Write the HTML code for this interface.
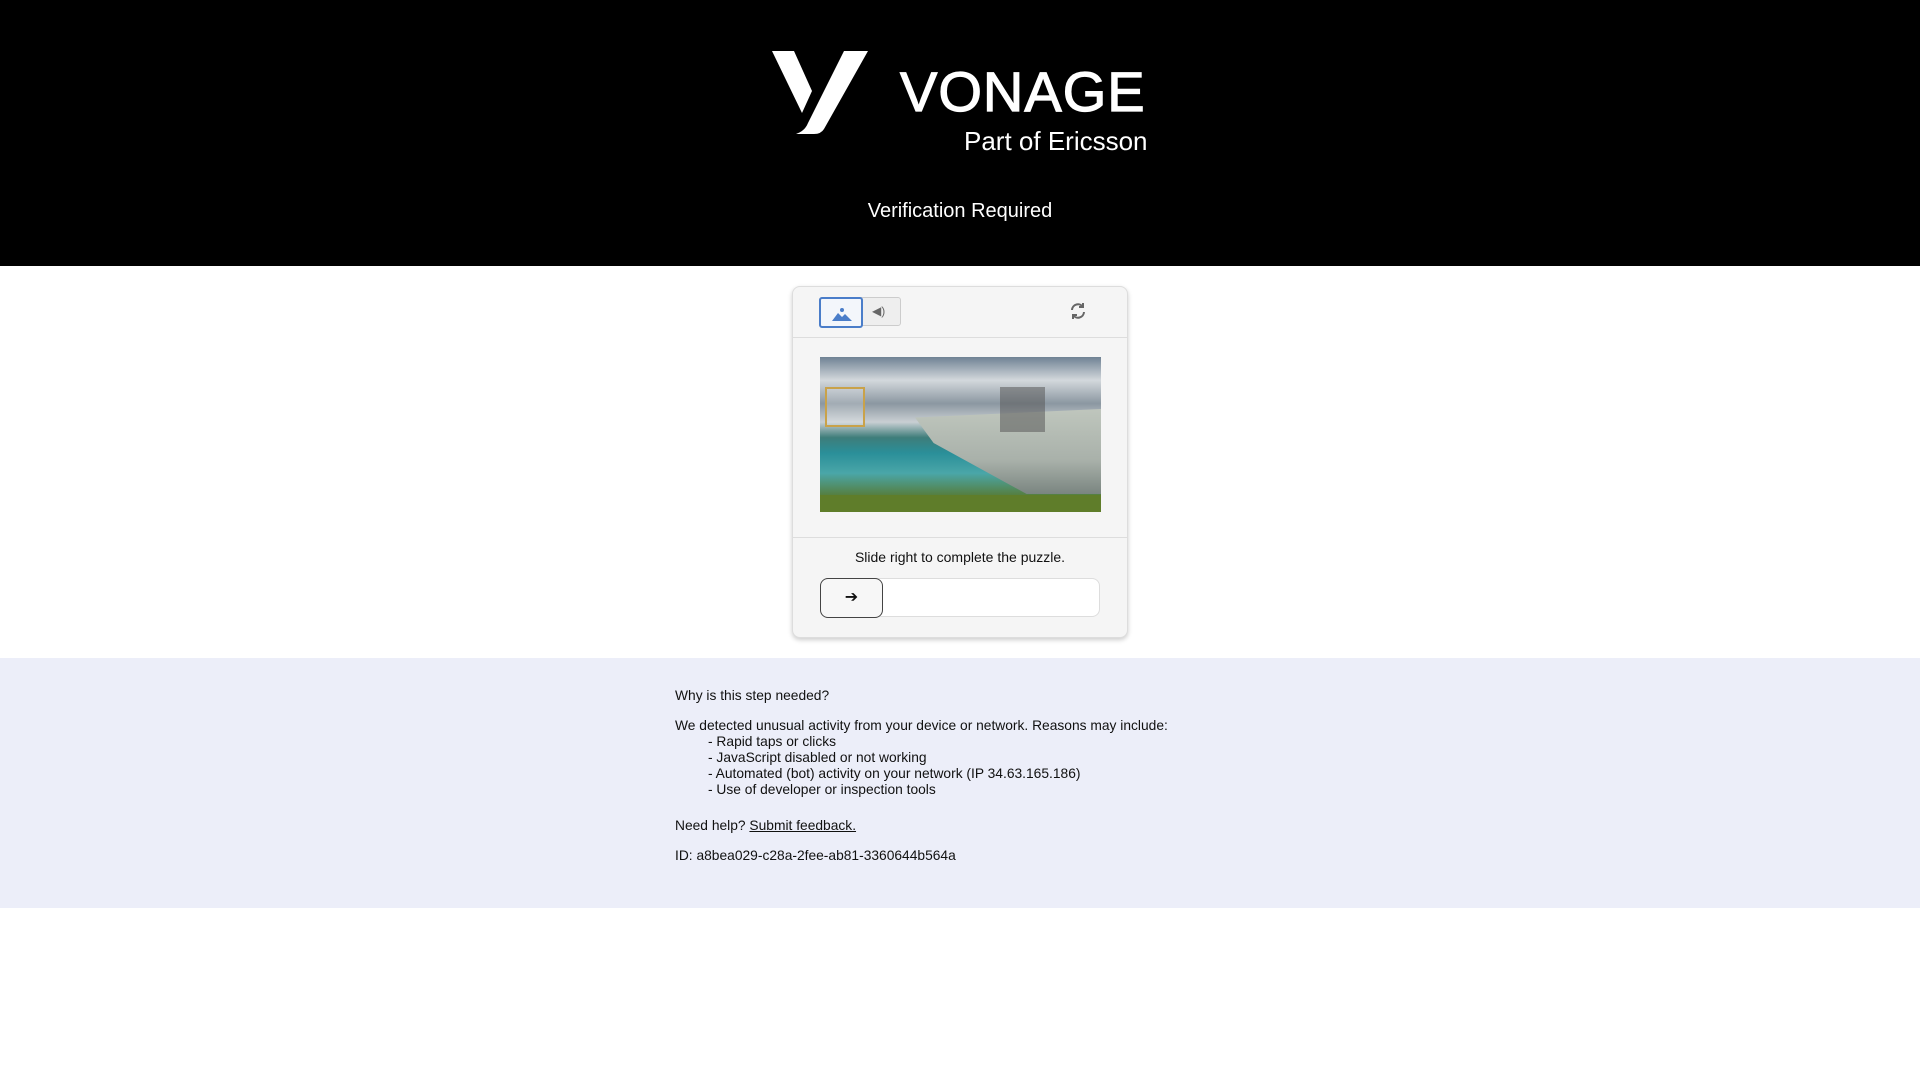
<!DOCTYPE html>
<html><head><meta charset="utf-8"><style>
*{margin:0;padding:0;box-sizing:border-box}
body{width:1920px;height:1080px;background:#fff;font-family:"Liberation Sans",sans-serif;position:relative;overflow:hidden;color:#111}
.hdr{position:absolute;left:0;top:0;width:1920px;height:266px;background:#000;color:#fff}
.vonage{position:absolute;left:900px;top:62px;font-size:56px;font-weight:normal;letter-spacing:1px;line-height:60px;-webkit-text-stroke:1.2px #fff}
.part{position:absolute;left:964px;top:126px;font-size:26px;line-height:30px}
.ver{position:absolute;left:0;width:1920px;text-align:center;top:200px;font-size:20px}
.card{position:absolute;left:792px;top:286px;width:336px;height:352px;background:#f5f5f5;border:1px solid #ddd;border-radius:8px;box-shadow:0 2px 5px rgba(0,0,0,.2)}
.tabs{position:absolute;left:26px;top:10px;width:82px;height:29px;border:1px solid #ccc;border-radius:3px;background:#eee}
.tab1{position:absolute;left:-1px;top:-1px;width:44px;height:31px;border:2px solid #4a7dc9;border-radius:3px;background:#f3f6fb}
.div1{position:absolute;left:0;top:50px;width:100%;height:1px;background:#ddd}
.img{position:absolute;left:27px;top:70px;width:281px;height:155px;overflow:hidden;
background:linear-gradient(180deg,#6f8294 0%,#d3d8dc 15%,#8b97a1 30%,#c9cfd3 42%,#3e7d7a 52%,#2a8f99 62%,#4aa6a8 75%,#567c3a 90%,#6c8a2b 100%)}
.div2{position:absolute;left:0;top:250px;width:100%;height:1px;background:#ddd}
.msg{position:absolute;left:0;width:100%;top:262px;text-align:center;font-size:14px}
.track{position:absolute;left:27px;top:291px;width:280px;height:39px;background:#fff;border:1px solid #ddd;border-radius:8px}
.btn{position:absolute;left:27px;top:291px;width:63px;height:40px;background:#f7f7f7;border:1px solid #444;border-radius:8px;text-align:center;line-height:38px;font-size:16px}
.foot{position:absolute;left:0;top:658px;width:1920px;height:250px;background:#eceef9}
.ft{position:absolute;left:675px;font-size:13.8px;line-height:16px}
.ind{left:708px}
</style></head><body>
<div class="hdr">
<svg style="position:absolute;left:772px;top:51px" width="96" height="83" viewBox="0 0 96 83"><path d="M0 0H22L40 40 30 62Z" fill="#fff"/><path d="M72 0H96L52 78Q49 83 42 83H24Q33 80 36 72Z" fill="#fff"/></svg>
<div class="vonage">VONAGE</div>
<div class="part">Part of Ericsson</div>
<div class="ver">Verification Required</div>
</div>
<div class="card">
<div class="tabs"><div class="tab1"><svg style="position:absolute;left:11px;top:8px" width="20" height="14" viewBox="0 0 20 14"><circle cx="10" cy="3" r="2" fill="#4a7dc9"/><path d="M0 14L6 6 10 10 13 7 20 14Z" fill="#4a7dc9"/></svg></div>
<span style="position:absolute;left:52px;top:6px;font-size:12px;color:#666">◀)</span></div>
<svg style="position:absolute;left:276px;top:15px" width="18" height="18" viewBox="0 0 18 18" fill="none" stroke="#666" stroke-width="2"><path d="M3 8A6 6 0 0 1 14 5"/><path d="M15 10A6 6 0 0 1 4 13"/><path d="M14 1V5H10" /><path d="M4 17V13H8"/></svg>
<div class="div1"></div>
<div class="img">
<div style="position:absolute;left:95px;top:52px;width:186px;height:85px;background:linear-gradient(180deg,#bfc6bd,#a9b1aa 60%,#7a8580);clip-path:polygon(0 10%,100% 0,100% 100%,60% 100%,10% 40%)"></div>
<div style="position:absolute;left:5px;top:30px;width:40px;height:40px;border:2px solid #c9a24a;background:rgba(255,255,255,.2)"></div>
<div style="position:absolute;left:180px;top:30px;width:45px;height:45px;background:rgba(90,90,90,.55)"></div>
<div style="position:absolute;left:0;top:138px;width:281px;height:17px;background:#5f7d2a"></div>
</div>
<div class="div2"></div>
<div class="msg">Slide right to complete the puzzle.</div>
<div class="track"></div>
<div class="btn">➔</div>
</div>
<div class="foot"></div>
<div class="ft" style="top:688px">Why is this step needed?</div>
<div class="ft" style="top:718px">We detected unusual activity from your device or network. Reasons may include:</div>
<div class="ft ind" style="top:734px">- Rapid taps or clicks</div>
<div class="ft ind" style="top:750px">- JavaScript disabled or not working</div>
<div class="ft ind" style="top:766px">- Automated (bot) activity on your network (IP 34.63.165.186)</div>
<div class="ft ind" style="top:782px">- Use of developer or inspection tools</div>
<div class="ft" style="top:818px">Need help? <u>Submit feedback.</u></div>
<div class="ft" style="top:848px">ID: a8bea029-c28a-2fee-ab81-3360644b564a</div>
</body></html>
